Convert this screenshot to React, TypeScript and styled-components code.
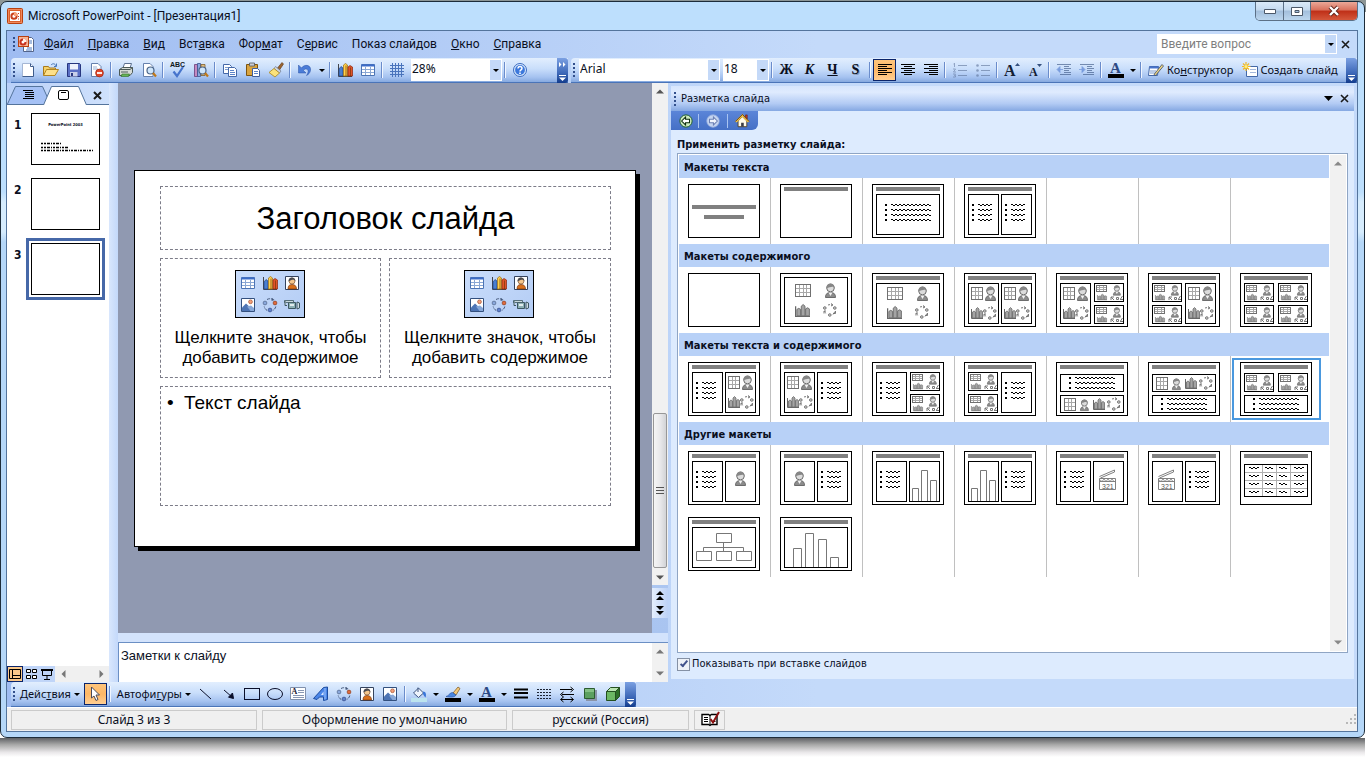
import React from "react";
import styled, { createGlobalStyle, css } from "styled-components";

const ui = `Roboto, "Noto Sans", sans-serif`;
const humanist = `"Noto Sans", "Open Sans", sans-serif`;
const tahoma = `"DejaVu Sans Condensed", "DejaVu Sans", sans-serif`;
const serif = `"Liberation Serif", serif`;

const GlobalStyle = createGlobalStyle`
  *, *::before, *::after { box-sizing: border-box; }
  body {
    margin: 0;
    background: #fff;
    font: 12px/16px ${ui};
    color: #0a0f1e;
  }
  button, input, select { font: inherit; color: inherit; margin: 0; }
  button { border: 0; padding: 0; background: none; cursor: default; }
  svg { display: block; flex: none; overflow: visible; }
  h1, h2, p { margin: 0; font: inherit; }
`;

/* ---------- window frame ---------- */

const Desktop = styled.div`
  display: flex;
  flex-direction: column;
  height: 100vh;
  min-height: 700px;
  padding: 1px 1px 0 0;
  background: linear-gradient(#8d9696 0 12px, #fff 12px);
`;

const AppWindow = styled.div`
  flex: 1;
  min-height: 0;
  display: flex;
  flex-direction: column;
  padding: 0 6px 5px 5px;
  border: 1px solid #1d2c3a;
  border-radius: 7px;
  background: linear-gradient(#bddffd 0 190px, #d6ecfd 200px 230px, #b5d7f8 240px);
`;

const DropShade = styled.div`
  flex: none;
  height: 19px;
  background: linear-gradient(#5f6164, #a8a8a8 35%, #e9e7e9 75%, #fff);
`;

const TitleBar = styled.header`
  flex: none;
  display: flex;
  align-items: flex-start;
  height: 28px;
`;

const TitleText = styled.h1`
  flex: 1;
  display: flex;
  align-items: center;
  gap: 5px;
  height: 27px;
  padding-left: 1px;
  font-size: 12px;
`;

const WinButtons = styled.div`
  display: flex;
  border: 1px solid #5c7086;
  border-top: 0;
  border-radius: 0 0 5px 5px;
  overflow: hidden;
`;

const WinButton = styled.button<{ $close?: boolean }>`
  display: flex;
  align-items: center;
  justify-content: center;
  width: ${(p) => (p.$close ? 47 : 27)}px;
  height: 18px;
  background: ${(p) =>
    p.$close
      ? "linear-gradient(#eba898, #d9705c 45%, #bf2f17 50%, #d4573b)"
      : "linear-gradient(#dbeaf8, #c3d9ee 45%, #a3bfdc 50%, #bcd6ee)"};
  & + & { border-left: 1px solid #5c7086; }
`;

const Client = styled.div`
  flex: 1;
  min-height: 0;
  display: flex;
  flex-direction: column;
  border: 1px solid #54749c;
  background: linear-gradient(90deg, #9fbcf1, #c4dafa 60%);
`;

/* ---------- bars ---------- */

const MenuBar = styled.nav`
  flex: none;
  display: flex;
  align-items: center;
  height: 27px;
  padding: 0 4px 1px 6px;
`;

const Grip = styled.span`
  flex: none;
  width: 2px;
  height: 14px;
  margin-right: 1px;
  background: repeating-linear-gradient(#33508c 0 2px, transparent 2px 4px);
`;

const MenuIcon = styled.span`
  margin: 0 3px 0 2px;
`;

const MenuItem = styled.button`
  height: 20px;
  padding: 0 7px;
  font-size: 12px;
  white-space: nowrap;
`;

const Spacer = styled.span<{ $w?: number }>`
  flex: ${(p) => (p.$w ? "none" : 1)};
  width: ${(p) => p.$w ?? 0}px;
`;

const HelpBox = styled.div`
  display: flex;
  width: 180px;
  height: 20px;
  border: 1px solid #fff;
  background: #fff;
  input {
    flex: 1;
    min-width: 0;
    border: 0;
    padding: 0 3px;
    background: none;
    font-size: 12px;
    outline: 0;
  }
  input::placeholder { color: #7f7f7f; opacity: 1; }
  button {
    display: flex;
    align-items: center;
    justify-content: center;
    width: 11px;
    background: #c4d9f8;
  }
`;

const CloseX = styled.button`
  display: flex;
  align-items: center;
  justify-content: center;
  width: 16px;
  height: 18px;
`;

const BarRow = styled.div`
  flex: none;
  display: flex;
  gap: 3px;
  height: 25px;
  padding-left: 4px;
`;

const ToolBar = styled.div<{ $grow?: boolean }>`
  display: flex;
  align-items: center;
  flex: ${(p) => (p.$grow ? "1" : "none")};
  min-width: 0;
  height: 25px;
  padding-left: 2px;
  border-bottom: 1px solid #4a74b8;
  border-radius: 4px 0 0 0;
  background: linear-gradient(#e2eefe, #c9defb 45%, #a5c2f0 80%, #86a9df);
`;

const BarEnd = styled.button<{ $full?: boolean }>`
  flex: none;
  display: flex;
  flex-direction: column;
  align-items: center;
  justify-content: ${(p) => (p.$full ? "space-between" : "flex-end")};
  width: 11px;
  height: 25px;
  padding: 4px 0 2px;
  border-radius: 0 3px 3px 0;
  background: linear-gradient(#7ba0e2, #3d68b8 60%, #123b8c);
`;

const ToolButton = styled.button<{ $on?: boolean; $off?: boolean }>`
  flex: none;
  display: flex;
  align-items: center;
  justify-content: center;
  width: 23px;
  height: 22px;
  ${(p) => p.$off && css`opacity: 0.6;`}
  ${(p) =>
    p.$on &&
    css`
      border: 1px solid #0a246a;
      background: linear-gradient(#fec57c, #fdb766 50%, #ffce92);
    `}
`;

const DropArrow = styled.button`
  flex: none;
  display: flex;
  align-items: center;
  justify-content: center;
  width: 11px;
  height: 22px;
`;

const Divider = styled.span`
  flex: none;
  width: 2px;
  height: 16px;
  margin: 0 2px;
  border-left: 1px solid #6a8ccb;
  border-right: 1px solid #f0f6ff;
`;

const TextButton = styled.button`
  flex: none;
  display: flex;
  align-items: center;
  gap: 3px;
  height: 22px;
  padding: 0 4px;
  font: 11px/16px ${humanist};
  white-space: nowrap;
`;

const Combo = styled.label<{ $w: number }>`
  position: relative;
  flex: none;
  width: ${(p) => p.$w}px;
  height: 22px;
  margin-left: 3px;
  border: 1px solid #fff;
  background: #fff;
  select {
    appearance: none;
    width: 100%;
    height: 20px;
    border: 0;
    padding: 0 14px 2px 0;
    background: none;
    font: 12px/16px ${humanist};
    outline: 0;
  }
  span {
    position: absolute;
    top: 0;
    right: 0;
    display: flex;
    align-items: center;
    justify-content: center;
    width: 11px;
    height: 20px;
    background: #c4d9f8;
    pointer-events: none;
  }
`;

const Glyph = styled.span<{ $italic?: boolean; $under?: boolean; $shadow?: boolean }>`
  font: bold 14px/18px ${serif};
  ${(p) => p.$italic && css`font-style: italic;`}
  ${(p) => p.$under && css`text-decoration: underline;`}
  ${(p) => p.$shadow && css`text-shadow: 1px 1px 0 #8798b8;`}
`;

/* ---------- main area ---------- */

const Work = styled.main`
  flex: 1;
  min-height: 0;
  display: flex;
`;

const SidePane = styled.aside`
  flex: none;
  display: flex;
  flex-direction: column;
  width: 102px;
  background: #fff;
`;

const Tabs = styled.div`
  flex: none;
  display: flex;
  align-items: flex-end;
  height: 22px;
  padding-right: 4px;
  border-bottom: 1px solid #54749c;
  background: linear-gradient(90deg, #b9d0f8, #cfe1fc);
`;

const Tab = styled.button<{ $front?: boolean }>`
  flex: none;
  width: 44px;
  height: 19px;
  margin: 0 ${(p) => (p.$front ? 0 : -8)}px ${(p) => (p.$front ? -1 : 0)}px 0;
`;

const SlideList = styled.ol`
  flex: 1;
  min-height: 0;
  overflow: hidden;
  list-style: none;
  margin: 0;
  padding: 3px 0 0 7px;
`;

const SlideItem = styled.li`
  display: flex;
  height: 65px;
  font: bold 12px/16px ${tahoma};
  > span { width: 12px; padding-top: 9px; }
`;

const SlideThumb = styled.button<{ $on?: boolean }>`
  width: 79px;
  height: 62px;
  padding: 2px;
  border: 3px solid ${(p) => (p.$on ? "#4668a8" : "transparent")};
  > span {
    display: block;
    height: 52px;
    border: 1px solid #000;
    background: #fff;
    overflow: hidden;
  }
`;

const MiniTitle = styled.span`
  display: block;
  padding-top: 8px;
  text-align: center;
  font: bold 4px/5px ${tahoma};
`;

const ViewBar = styled.div`
  flex: none;
  display: flex;
  height: 16px;
  background: #f0f0f0;
`;

const ViewButton = styled.button<{ $on?: boolean }>`
  display: flex;
  align-items: center;
  justify-content: center;
  width: 16px;
  height: 16px;
  background: #c0d5f8;
  ${(p) => p.$on && css`border: 1px solid #0a246a; background: #fbc98b;`}
`;

const HScroll = styled.div`
  flex: 1;
  display: flex;
  align-items: center;
  justify-content: space-between;
  padding: 0 4px 0 5px;
`;

const Splitter = styled.div`
  flex: none;
  width: 9px;
  background: linear-gradient(90deg, #d9e7fd, #c3d8fa);
`;

const Center = styled.section`
  flex: 1;
  min-width: 0;
  display: flex;
  flex-direction: column;
  background: #d3e3fc;
`;

const StageRow = styled.div`
  flex: 1;
  min-height: 0;
  display: flex;
`;

const Stage = styled.div`
  flex: 1;
  min-width: 0;
  display: flex;
  align-items: center;
  justify-content: center;
  overflow: hidden;
  background: #9099b1;
`;

const Slide = styled.article`
  flex: none;
  display: grid;
  grid-template-columns: 221px 222px;
  grid-template-rows: 64px 120px 120px;
  gap: 8px;
  width: 502px;
  height: 377px;
  padding: 15px 25px;
  border: 1px solid #000;
  background: #fff;
  color: #000;
  box-shadow: 4px 4px 0 #000;
  font-family: "Liberation Sans", Arial, sans-serif;
`;

const Placeholder = styled.div<{ $wide?: boolean }>`
  border: 1px dashed #7c7c88;
  ${(p) => p.$wide && css`grid-column: 1 / -1;`}
`;

const SlideTitle = styled.h2`
  text-align: center;
  font-size: 31px;
  line-height: 64px;
`;

const ContentHint = styled.p`
  text-align: center;
  font-size: 17px;
  line-height: 20px;
  white-space: nowrap;
`;

const SlideBody = styled.ul`
  list-style: none;
  margin: 0;
  padding: 4px 0 0 6px;
  font-size: 19px;
  line-height: 24px;
  li { display: flex; }
  li::before {
    content: "•";
    width: 17px;
  }
`;

const Palette = styled.div`
  display: grid;
  grid-template-columns: repeat(3, 22px);
  grid-template-rows: repeat(2, 22px);
  width: 70px;
  height: 48px;
  margin: 11px 0 10px 74px;
  padding: 1px;
  border: 1px solid #000;
  background: linear-gradient(135deg, #c9dcfa, #b4cdf5);
  button {
    display: flex;
    align-items: center;
    justify-content: center;
  }
`;

const VScroll = styled.div`
  flex: none;
  display: flex;
  flex-direction: column;
  align-items: center;
  justify-content: space-between;
  width: 16px;
  padding: 5px 0;
  background: #f1f1f1;
`;

const Track = styled.div`
  flex: 1;
  align-self: stretch;
  display: flex;
  flex-direction: column;
  justify-content: flex-end;
  padding: 0 1px 5px;
`;

const ScrollThumb = styled.div`
  display: flex;
  align-items: center;
  justify-content: center;
  height: 155px;
  border: 1px solid #979797;
  border-radius: 2px;
  background: linear-gradient(90deg, #f5f5f5, #e9e9eb 50%, #d2d3d6);
`;

const PageJump = styled.button`
  display: flex;
  align-items: center;
  justify-content: center;
  width: 16px;
  height: 15px;
  background: linear-gradient(90deg, #e4eefd, #bdd2f6);
`;

const StageScroll = styled.div`
  flex: none;
  display: flex;
  flex-direction: column;
  width: 16px;
  background: linear-gradient(#c3d8fa, #a9c4f0);
`;

const StageScrollBar = styled(VScroll)`
  flex: 1;
  padding-bottom: 4px;
`;

const JumpGroup = styled.div`
  flex: none;
  padding: 3px 0 15px;
`;

const Notes = styled.div`
  flex: none;
  display: flex;
  height: 40px;
  margin-top: 9px;
  border-top: 1px solid #6b8fc4;
  border-left: 1px solid #6b8fc4;
  background: #fff;
`;

const NotesText = styled.div`
  flex: 1;
  padding: 5px 2px;
  font: 13px/16px "Liberation Sans", Arial, sans-serif;
`;

/* ---------- task pane ---------- */

const TaskPane = styled.section`
  flex: none;
  display: flex;
  flex-direction: column;
  width: 683px;
  margin: 3px 3px 3px 3px;
  background: #ddebfe;
  font-family: ${tahoma};
  font-size: 11px;
`;

const PaneHead = styled.div`
  flex: none;
  display: flex;
  align-items: center;
  height: 25px;
  padding: 0 2px 0 3px;
  background: linear-gradient(#d6e5fd, #dfebfe 25%, #b3cbf4 70%, #85a8e2);
  > h2 { flex: 1; padding-left: 4px; padding-top: 1px; }
`;

const PaneNav = styled.div`
  flex: none;
  display: flex;
  align-items: center;
  align-self: flex-start;
  height: 19px;
  padding: 0 2px;
  border-radius: 0 0 6px 0;
  background: linear-gradient(#5b85d8, #4570c6);
  button + button { border-left: 1px solid #a9c4f2; }
`;

const NavButton = styled.button`
  display: flex;
  align-items: center;
  justify-content: center;
  width: 29px;
  height: 14px;
  &:first-child { width: 25px; }
`;

const PaneLabel = styled.div`
  flex: none;
  padding: 7px 6px 0;
  font-weight: bold;
  line-height: 16px;
`;

const ListBox = styled.div`
  flex: 1;
  min-height: 0;
  display: flex;
  margin: 0 6px;
  padding: 1px;
  border: 1px solid #8fa5c4;
  background: #fff;
`;

const Groups = styled.div`
  flex: 1;
  min-width: 0;
  overflow: hidden;
  padding-right: 1px;
`;

const GroupHead = styled.h2`
  height: 23px;
  padding: 2px 0 0 5px;
  background: #b8d1f7;
  font-weight: bold;
  line-height: 21px;
`;

const GroupGrid = styled.div`
  display: grid;
  grid-template-columns: repeat(7, 92px);
  grid-auto-rows: 66px;
`;

const Cell = styled.div`
  padding: 2px 1px;
  border-right: 1px solid #c0c0c0;
  &:nth-child(7n) { border-right: 0; }
`;

const LayoutButton = styled.button<{ $on?: boolean }>`
  display: flex;
  align-items: center;
  width: 89px;
  height: 62px;
  padding-left: 6px;
  border: 2px solid ${(p) => (p.$on ? "#4a98de" : "transparent")};
`;

const CheckRow = styled.label`
  flex: none;
  display: flex;
  align-items: center;
  gap: 2px;
  height: 26px;
  padding: 0 6px 4px;
  input {
    appearance: none;
    width: 13px;
    height: 13px;
    border: 1px solid #8591a5;
    background: #eef2f8;
    display: grid;
    place-items: center;
  }
  input:checked::after {
    content: "";
    width: 4px;
    height: 8px;
    margin-top: -2px;
    border: solid #42538c;
    border-width: 0 2px 2px 0;
    transform: rotate(40deg);
  }
`;

/* ---------- status bar ---------- */

const StatusBar = styled.footer`
  flex: none;
  display: flex;
  align-items: center;
  gap: 5px;
  height: 24px;
  padding-left: 4px;
  border-top: 1px solid #fff;
  background: #f0f0f0;
  font-family: ${humanist};
  font-size: 12px;
`;

const StatusCell = styled.div<{ $w: number }>`
  display: flex;
  align-items: center;
  justify-content: center;
  width: ${(p) => p.$w}px;
  height: 20px;
  border: 1px solid #cbcbcb;
`;

/* ---------- glyph drawings ---------- */

const Down = ({ c = "#000", w = 6 }: { c?: string; w?: number }) => (
  <svg width={w} height={Math.ceil(w / 2)} viewBox="0 0 6 3" preserveAspectRatio="none" aria-hidden>
    <path d="M0 0h6L3 3z" fill={c} />
  </svg>
);

const Arrow = ({ dir, c = "#555" }: { dir: "u" | "d" | "l" | "r"; c?: string }) => {
  const d = { u: "M0 5.500L4 1.500L8 5.500z", d: "M0 2.500L4 6.500L8 2.500z", l: "M5.500 0L1.500 4L5.500 8z", r: "M2.500 0L6.500 4L2.500 8z" }[dir];
  return (
    <svg width="8" height="8" viewBox="0 0 8 8" aria-hidden>
      <path d={d} fill={c} />
    </svg>
  );
};

const Cross = ({ w = 2 }: { w?: number }) => (
  <svg width="9" height="9" viewBox="0 0 9 9" aria-hidden>
    <path d="M1 1l7 7M8 1l-7 7" stroke="#1a1a1a" strokeWidth={w} />
  </svg>
);

const chartBars = (
  <>
    <path d="M1.500 2v12.500H15" stroke="#44464c" fill="none" />
    <path d="M2 7l2-2.500L6 6v8H2z" fill="#4b7fd0" stroke="#1e4488" strokeWidth=".7" />
    <path d="M6.500 3L8.500 1.500l2 1.500v11h-4z" fill="#ffd24a" stroke="#9a6a10" strokeWidth=".7" />
    <path d="M11 5l2-1.500 2.500 1.500v9H11z" fill="#e0552a" stroke="#8c2408" strokeWidth=".7" />
    <path d="M9 3.500V14M13.500 5.500V14" stroke="#7a3408" strokeWidth=".7" />
  </>
);

const tableGrid = (
  <>
    <path d="M1.500 2.500h13v11h-13z" fill="#fff" stroke="#4c74b4" />
    <path d="M1.500 2.500h13v2h-13z" fill="#3c6cc8" />
    <path d="M2 7.500h12M2 10.500h12M5.500 5v8M10.500 5v8" stroke="#8aa7d4" />
  </>
);

const cycle = (
  <>
    <path d="M5 2.500a6 6 0 0 1 6 0M13.800 9.500a6 6 0 0 1-3 4M5.200 13.500a6 6 0 0 1-3-4" stroke="#45587a" strokeDasharray="3 1" fill="none" />
    <circle cx="3" cy="6" r="1.900" fill="#8aa8dc" stroke="#45587a" strokeWidth=".6" />
    <circle cx="13" cy="6" r="1.900" fill="#e06a3c" stroke="#803010" strokeWidth=".6" />
    <circle cx="8" cy="13" r="1.900" fill="#5f80cc" stroke="#2a4078" strokeWidth=".6" />
    <path d="M10 1l2.500 2L9.500 4z" fill="#45587a" />
  </>
);

const person = (
  <>
    <path d="M1.500 1.500h13v13h-13z" fill="#fff" stroke="#33425e" />
    <path d="M4 14c0-3 1-4.500 4-4.500s4.500 1.500 4.500 4.500z" fill="#d8701c" stroke="#6b2c08" strokeWidth=".6" />
    <circle cx="8" cy="6" r="3" fill="#f5c68c" stroke="#6b4020" strokeWidth=".6" />
    <path d="M4.500 6.500c-.5-5 7-5.500 7 0-1-2.500-3.500-2.500-7 0z" fill="#4a4a50" />
  </>
);

const picture = (
  <>
    <path d="M1.500 1.500h13v13h-13z" fill="#fff" stroke="#33507e" />
    <path d="M2 14V10.500l4-4 8 7.500z" fill="#4d74b4" />
    <path d="M7 9.500l3.500 4.500H14V11l-3-2.500z" fill="#88a8d8" />
    <circle cx="10.500" cy="4.800" r="1.900" fill="#f3a07c" stroke="#963c18" strokeWidth=".6" />
  </>
);

const doc = <path d="M2.500 1.500H9l3 3v10H2.500z" fill="#fff" stroke="#6681ad" />;
const lens = (
  <>
    <circle cx="9.500" cy="8.500" r="3.500" fill="#cfe6fb" stroke="#4a6488" strokeWidth="1.200" />
    <path d="M12 11l3 3.500" stroke="#c07818" strokeWidth="2.200" />
  </>
);

const icons: Record<string, React.ReactNode> = {
  app: (
    <>
      <rect x=".5" y=".5" width="15" height="15" rx="1" fill="#f08a5c" stroke="#b8400f" />
      <rect x="2.500" y="2.500" width="11" height="11" fill="#fff" stroke="#d8602c" />
      <circle cx="7" cy="8.200" r="2.600" fill="#fff" stroke="#c8401c" strokeWidth="2" />
      <path d="M7 8V4A4 4 0 0 1 11 8z" fill="#f7a078" />
      <path d="M11.500 5v1M11.500 8v1M11.500 10.500v1" stroke="#c8401c" />
    </>
  ),
  pptdoc: (
    <>
      <path d="M5.500 1.500h8l2 2v12h-10z" fill="#fff" stroke="#53658b" />
      <path d="M11 5h3M11 7h3M9 12h5M8 14h6" stroke="#4e7ac0" />
      <rect x=".5" y=".5" width="10" height="10" fill="#f7b595" stroke="#b8400f" />
      <circle cx="5" cy="6" r="2.500" fill="#fff" stroke="#c8301c" strokeWidth="2" />
      <path d="M5 6V2.500A3.500 3.500 0 0 1 8.500 6z" fill="#fff0e8" />
    </>
  ),
  new: (
    <>
      <path d="M2.500 1.500h8l3 3v10h-11z" fill="#fff" stroke="#a4b6d4" />
      <path d="M10.500 1.500v3h3M13.500 4.500v10H2.500" fill="none" stroke="#3e5c8c" />
    </>
  ),
  open: (
    <>
      <path d="M.5 13.500v-9h5l1 1.500h6v2" fill="#f6d268" stroke="#a87a1c" />
      <path d="M.5 13.500l3-6h12l-3.500 6z" fill="#fde08a" stroke="#b48620" />
      <path d="M8 3c2-2 4-1.500 5 1M13.500 1.500V4.500H11" fill="none" stroke="#4a78b8" />
    </>
  ),
  save: (
    <>
      <path d="M1.500 1.500h12l1 1v12h-13z" fill="#5a6fc4" stroke="#27367e" />
      <path d="M4 2h8v5.500H4z" fill="#eef2fc" />
      <path d="M4 10h7.500v4.500H4z" fill="#c7cfe8" />
      <path d="M5 11h2v3H5z" fill="#27367e" />
    </>
  ),
  perm: (
    <>
      {doc}
      <path d="M4 5h4M4 7h5" stroke="#9db2d4" />
      <circle cx="10.500" cy="11" r="3.900" fill="#e0482c" stroke="#9c2410" strokeWidth=".7" />
      <path d="M8 11h5" stroke="#fff" strokeWidth="1.800" />
    </>
  ),
  print: (
    <>
      <path d="M5 6l1.500-4.500h7L12 6z" fill="#fff" stroke="#5c7090" />
      <path d="M1.500 7.500l3-2h10v5l-2.500 3h-10.500z" fill="#d6dbd6" stroke="#4c5a58" />
      <path d="M1.500 7.500h10.500l2.500-2M3 10h7" fill="none" stroke="#4c5a58" />
      <path d="M4 12h7.500l-1 2.500H3z" fill="#68b458" stroke="#2c6a24" strokeWidth=".6" />
    </>
  ),
  preview: (
    <>
      {doc}
      {lens}
    </>
  ),
  spell: (
    <>
      <text x="0" y="5" fontFamily="Liberation Sans" fontWeight="700" fontSize="7" fill="#101820">ABC</text>
      <path d="M3.500 9.500l3.500 4.500L13 5" fill="none" stroke="#4674cc" strokeWidth="2.200" />
    </>
  ),
  research: (
    <>
      <path d="M1.500 2.500h3v12h-3z" fill="#c48ac0" stroke="#6a3c78" strokeWidth=".8" />
      <path d="M4.500 1.500h3v13h-3z" fill="#8aa8e0" stroke="#3a5490" strokeWidth=".8" />
      <path d="M8 2.500h4v11H8z" fill="#e4c080" stroke="#80602c" strokeWidth=".8" />
      {lens}
    </>
  ),
  copy: (
    <>
      <path d="M1.500 2.500h6l2 2v7h-8z" fill="#fff" stroke="#4468a8" />
      <path d="M3 5.500h4M3 7.500h4" stroke="#7c9cd0" />
      <path d="M6.500 5.500h6l2 2v7h-8z" fill="#fff" stroke="#4468a8" />
      <path d="M8 8.500h4M8 10.500h5M8 12.500h5" stroke="#5c84c8" />
    </>
  ),
  paste: (
    <>
      <path d="M1.500 2.500h11v11h-11z" fill="#d9a440" stroke="#7c5410" />
      <path d="M4.500 1h5v3h-5z" fill="#c9ccd4" stroke="#54585e" strokeWidth=".8" />
      <path d="M7.500 6.500h5l2 2v6h-7z" fill="#fff" stroke="#3f5e9c" />
      <path d="M9 9.500h4M9 11.500h4" stroke="#5c84c8" />
    </>
  ),
  brush: (
    <>
      <path d="M9.500 6L14 .500l1.500 1.500L11.500 8z" fill="#9a6430" stroke="#5c3410" strokeWidth=".6" />
      <path d="M7.500 4.500l5.500 4.500-1.500 2L6 6.500z" fill="#d0d6e0" stroke="#606a7c" strokeWidth=".6" />
      <path d="M6 6.500l5.500 4.500L7 15l-6-4.500z" fill="#fbe27a" stroke="#a8841c" strokeWidth=".8" />
    </>
  ),
  undo: <path d="M4.500 6c3-4.500 10-3 9 2.500-.5 2.500-2 4-4 5 2-3 2.500-6-.5-6.500-1 0-2 .500-2.500 1.500L9 11H1.500V3z" fill="#4a7cd8" stroke="#2a52a4" strokeWidth=".5" />,
  chart: chartBars,
  table: tableGrid,
  grid: <path d="M1 3.500h14M1 6.500h14M1 9.500h14M1 12.500h14M3.500 1v14M6.500 1v14M9.500 1v14M12.500 1v14" stroke="#4a74bc" />,
  help: (
    <>
      <circle cx="8" cy="8" r="6.500" fill="#d8e8fc" stroke="#3c6cc0" />
      <circle cx="8" cy="8" r="4.900" fill="#3c78dc" />
      <path d="M6 6.500c0-3 4-2.500 4-.2C10 8 8 7.800 8 9.500" fill="none" stroke="#fff" strokeWidth="1.500" />
      <path d="M7.200 10.500h1.600v1.500H7.200z" fill="#fff" />
    </>
  ),
  left: <path d="M1 2.500h14M1 4.500h9M1 6.500h14M1 8.500h9M1 10.500h14M1 12.500h9" stroke="#000" />,
  center: <path d="M1 2.500h14M4 4.500h8M1 6.500h14M4 8.500h8M1 10.500h14M4 12.500h8" stroke="#000" />,
  right: <path d="M1 2.500h14M6 4.500h9M1 6.500h14M6 8.500h9M1 10.500h14M6 12.500h9" stroke="#000" />,
  numlist: (
    <>
      <path d="M6 3.500h9M6 8.500h9M6 13.500h9" stroke="#5d7298" />
      <path d="M2.500 1v4M1.500 2h1M1 7h2.500l-2 3h2.500M1 12h2.500l-1 1.500h1V15H1" stroke="#5d7298" fill="none" strokeWidth=".9" />
    </>
  ),
  bullist: (
    <>
      <path d="M6 3.500h9M6 8.500h9M6 13.500h9" stroke="#5d7298" />
      <circle cx="2.500" cy="3.500" r="1.300" fill="#5d7298" />
      <circle cx="2.500" cy="8.500" r="1.300" fill="#5d7298" />
      <circle cx="2.500" cy="13.500" r="1.300" fill="#5d7298" />
    </>
  ),
  outdent: (
    <>
      <path d="M1 2.500h14M8 4.500h5M8 6.500h7M8 8.500h5M8 10.500h7M4 12.500h11" stroke="#35507e" />
      <path d="M4 4.500L1 7.500l3 3zM4 7.500h3" fill="#4874cc" stroke="#4874cc" strokeWidth=".8" />
    </>
  ),
  indent: (
    <>
      <path d="M1 2.500h14M8 4.500h5M8 6.500h7M8 8.500h5M8 10.500h7M4 12.500h11" stroke="#35507e" />
      <path d="M3 4.500l3 3-3 3zM0 7.500h3" fill="#4874cc" stroke="#4874cc" strokeWidth=".8" />
    </>
  ),
  grow: (
    <>
      <text x="0" y="14" fontFamily="Liberation Serif" fontWeight="700" fontSize="16" fill="#142033">A</text>
      <path d="M11 4l2.500-3L16 4z" fill="#35507e" />
    </>
  ),
  shrink: (
    <>
      <text x="2" y="14" fontFamily="Liberation Serif" fontWeight="700" fontSize="12" fill="#142033">A</text>
      <path d="M10 2l2.500 3L15 2z" fill="#35507e" />
    </>
  ),
  fontcolor: (
    <>
      <text x="2" y="11" fontFamily="Liberation Serif" fontWeight="700" fontSize="15" fill="#2c4a84">A</text>
      <path d="M0 12h16v4H0z" fill="#000" />
    </>
  ),
  design: (
    <>
      <path d="M1.500 4.500h9l-1 9h-9z" fill="#fff" stroke="#4468a8" />
      <path d="M1.500 4.500h9v2h-9z" fill="#4874cc" />
      <path d="M2 9h6M2 11h5" stroke="#7c9cd0" />
      <path d="M6 12.500l8-10 1.500 1.500-8 9.500z" fill="#f3d884" stroke="#3c4a60" strokeWidth=".8" />
    </>
  ),
  newslide: (
    <>
      <path d="M4.500 4.500h11v10h-11z" fill="#fff" stroke="#4468a8" />
      <path d="M8 7.500h6M8 10.500h6" stroke="#a4b8dc" />
      <path d="M4 0v9M0 4.500h8.500M1 1.500l6 6M7 1.500l-6 6" stroke="#f0b828" strokeWidth="1.200" />
      <circle cx="4" cy="4.500" r="1.500" fill="#fff27c" />
    </>
  ),
  pointer: <path d="M4.500 1l8 8H9l2 4.500-2 1L7 10l-2.500 2z" fill="#fff" stroke="#4a4a58" />,
  line: <path d="M2 3l11 10" stroke="#0a0f2a" />,
  arrow: <path d="M3 4l8 7M12.500 12.500l-1-5.500-4 4.200z" stroke="#0a0f2a" fill="#0a0f2a" />,
  rect: <rect x=".5" y="2.500" width="15" height="11" fill="none" stroke="#0a0f2a" />,
  ellipse: <ellipse cx="8" cy="8" rx="7.500" ry="5.500" fill="none" stroke="#0a0f2a" />,
  textbox: (
    <>
      <path d="M.5 1.500h15v12H.5z" fill="#fff" stroke="#8090ac" />
      <text x="1.500" y="8" fontFamily="Liberation Serif" fontWeight="700" fontSize="8" fill="#1a2030">A</text>
      <path d="M8 4.500h6M8 6.500h6M3 9.500h11M3 11.500h11" stroke="#6a7ca0" strokeWidth=".8" />
    </>
  ),
  wordart: (
    <>
      <path d="M.5 12.500L10.500 1.500l4-.5v12.500l-4 1V11H6.500L4 13.500z" fill="#4a86e8" stroke="#1c4ca0" />
      <path d="M8 9h2.500V5.500z" fill="#dce9ff" />
      <path d="M12 2v11.500" stroke="#9cc0f8" />
    </>
  ),
  cycle,
  person,
  picture,
  camera: (
    <>
      <path d="M4.500 5.500h7v6h-7z" fill="#8cb0b4" stroke="#3c5660" />
      <path d="M.5 3.500h9v2h-9z" fill="#c8d8dc" stroke="#3c5660" strokeWidth=".8" />
      <path d="M1 4v4.500h2M13 5v7l2.500-1V6z" fill="#d0dce4" stroke="#3c5660" />
      <path d="M6 8h4" stroke="#fff" strokeWidth="1.500" />
    </>
  ),
  fill: (
    <>
      <path d="M2.500 7l5-5 5 5-5 4.500z" fill="#eef4fc" stroke="#3c5480" />
      <path d="M7 6V1.500" stroke="#3c5480" />
      <path d="M12 5.500c3 0 3.500 3 2.500 6C13 10 12.500 9 12 8z" fill="#3a76d8" />
      <path d="M0 12h16v4H0z" fill="#bde4ee" />
    </>
  ),
  pen: (
    <>
      <path d="M8 7l5-6 2 1.500L11 9z" fill="#f3c87a" stroke="#7a5214" strokeWidth=".7" />
      <path d="M1 10.500c3 0 3-4 6.500-4L11 9c-1 2.500-6 2.500-10 1.500z" fill="#4a86e0" stroke="#244c98" strokeWidth=".6" />
      <path d="M0 12h16v4H0z" fill="#000" />
    </>
  ),
  lines: <path d="M1 3.500h14M1 7h14M1 11.500h14" stroke="#000" strokeWidth="2" />,
  dashes: <path d="M1 3.500h14M1 6.500h14M1 9.500h14M1 12.500h14" stroke="#1c2434" strokeDasharray="2 1" />,
  arrows: (
    <>
      <path d="M1 3.500h12M3 8.500h12M2 13.500h12" stroke="#000" />
      <path d="M11.500 1l3 2.500-3 2.500M4.500 6l-3 2.500 3 2.500M4.500 11l-3 2.500 3 2.500M11.500 11l3 2.500-3 2.500" fill="none" stroke="#000" />
    </>
  ),
  shadow: (
    <>
      <path d="M4 4h11v11H4z" fill="#8a94a8" />
      <path d="M2.500 2.500h10v10h-10z" fill="#5ca060" stroke="#2c5c30" />
      <path d="M3 3h9v3H3z" fill="#84c084" />
    </>
  ),
  cube: (
    <>
      <path d="M1.500 5.500h9v9h-9z" fill="#6cb864" stroke="#245020" />
      <path d="M1.500 5.500l4-4h9l-4 4z" fill="#b8e4b0" stroke="#245020" />
      <path d="M10.500 5.500l4-4v9l-4 4z" fill="#2c7028" stroke="#245020" />
    </>
  ),
  back: (
    <>
      <circle cx="8" cy="8" r="7" fill="#cdeabf" stroke="#1c5c1c" />
      <path d="M3 8l4.500-4.500v2.500h4.500v4H7.500v2.500z" fill="#fff" stroke="#0c2c0c" strokeWidth="1.200" />
    </>
  ),
  fwd: (
    <>
      <circle cx="8" cy="8" r="7" fill="#c4d4f0" stroke="#a8bce4" />
      <path d="M13 8L8.500 3.500v2.500H4v4h4.500v2.500z" fill="#f0f4fc" stroke="#6c80b4" strokeWidth="1.200" />
    </>
  ),
  home: (
    <>
      <path d="M3.500 8v6.500h10V8L8.500 3z" fill="#fffbea" stroke="#4c3c20" />
      <path d="M1 9l7.500-7.500L15.500 9" fill="none" stroke="#f0c040" strokeWidth="2.400" />
      <path d="M.5 8.500l8-8 7.500 8" fill="none" stroke="#5c3410" />
      <path d="M12 1h2v4.500l-2-2z" fill="#c83820" stroke="#601808" strokeWidth=".6" />
      <path d="M7 10h3v4.500H7z" fill="#3c3c44" />
    </>
  ),
  book: (
    <>
      <path d="M0 2.500h6.500l1.500 1 1.500-1H15v10H9.500l-1.500 1-1.500-1H0z" fill="#fff" stroke="#000" strokeWidth="1.400" />
      <path d="M8 3v10M2 5.500h4M2 7.500h4M2 9.500h4M10 9.500h3.500" stroke="#000" />
      <path d="M8.500 7l2.500 3.500L17 0" fill="none" stroke="#8c1010" strokeWidth="2" />
    </>
  ),
};

const Icon = ({ n, s = 16 }: { n: string; s?: number }) => (
  <svg width={s} height={s} viewBox="0 0 16 16" aria-hidden>
    {icons[n]}
  </svg>
);

/* ---------- layout previews ---------- */

const wave = (x: number, y: number, w: number) => (
  <g key={`${x}-${y}`} stroke="#000">
    <path d={`M${x} ${y + 0.5}h${w}`} strokeDasharray="2 2" />
    <path d={`M${x} ${y + 1.5}h${w}`} strokeDasharray="2 2" strokeDashoffset="2" />
  </g>
);

const Bullets = ({ x, y, n = 4, w = 14, gap = 6 }: { x: number; y: number; n?: number; w?: number; gap?: number }) => (
  <>
    {Array.from({ length: n }, (_, i) => (
      <React.Fragment key={i}>
        <rect x={x} y={y + i * 5} width="2" height="2" fill="#000" />
        {wave(x + gap, y + i * 5, w)}
      </React.Fragment>
    ))}
  </>
);

const Box = ({ x, y, w, h }: { x: number; y: number; w: number; h: number }) => (
  <rect x={x + 0.5} y={y + 0.5} width={w - 1} height={h - 1} fill="#fff" stroke="#000" />
);

const Bar = ({ x = 4, y = 3, w = 64 }: { x?: number; y?: number; w?: number }) => (
  <rect x={x} y={y} width={w} height="4" fill="#808080" />
);

const GTable = ({ x, y, w, h }: { x: number; y: number; w: number; h: number }) => {
  const cols = w > 13 ? 4 : 3;
  const cw = (w - 1) / cols;
  const rh = (h - 1) / 3;
  return (
    <g stroke="#a8a8a8" fill="none">
      {Array.from({ length: cols - 1 }, (_, i) => {
        const p = Math.round(x + cw * (i + 1)) + 0.5;
        return <path key={i} d={`M${p} ${y + 1}v${h - 2}`} />;
      })}
      {[1, 2].map((i) => {
        const p = Math.round(y + rh * i) + 0.5;
        return <path key={i} d={`M${x + 1} ${p}h${w - 2}`} />;
      })}
      <rect x={x + 0.5} y={y + 0.5} width={w - 1} height={h - 1} stroke="#707070" />
    </g>
  );
};

const GPerson = ({ x, y, s = 1 }: { x: number; y: number; s?: number }) => (
  <g transform={`translate(${x} ${y}) scale(${s})`}>
    <path d="M.5 14.500c0-3.500 1.500-5 5-5s5 1.500 5 5z" fill="#8c8c8c" stroke="#6c6c6c" />
    <circle cx="5.500" cy="5" r="3.800" fill="#dcdcdc" stroke="#6c6c6c" />
    <path d="M1.500 5C1-1 10-1 9.500 5 8 2.500 5 4.500 1.500 5z" fill="#868686" />
    <path d="M3.500 9.500l2 3.500 2-3.500z" fill="#f4f4f4" />
  </g>
);

const GChart = ({ x, y, w = 12, h = 12 }: { x: number; y: number; w?: number; h?: number }) => (
  <g transform={`translate(${x} ${y}) scale(${w / 12} ${h / 12})`}>
    <path d="M.5 2v9.500H12" stroke="#666" fill="none" />
    <path d="M1.500 5l1.500-1 1.500 1v6H1.500zM5 2l1.500-1.500L8 2v9H5zM8.500 4.500l1.500-1 1.500 1V11h-3z" fill="#a4a4a4" stroke="#6c6c6c" strokeWidth=".8" />
  </g>
);

const GCycle = ({ x, y }: { x: number; y: number }) => (
  <g transform={`translate(${x} ${y})`} stroke="#777" fill="none">
    <path d="M5 2a6 6 0 0 1 4 0M12 8.500l-2 3M1.500 8l1.500 3" strokeDasharray="2 1" />
    <circle cx="1.800" cy="5" r="1.300" fill="#ccc" />
    <circle cx="11.800" cy="5" r="1.300" fill="#ccc" />
    <circle cx="6.800" cy="12" r="1.300" fill="#ccc" />
    <path d="M8 .500l2 1.500-2 1M12.500 8v2.500H10M1 10.500V8h2" />
  </g>
);

const Column = ({ x }: { x: number }) => (
  <>
    <Box x={x} y={10} w={31} h={41} />
    <GTable x={x + 3} y={14} w={12} h={13} />
    <GPerson x={x + 17} y={13} />
    <GChart x={x + 3} y={34} />
    <GCycle x={x + 15} y={33} />
  </>
);

const Quad = ({ x, y }: { x: number; y: number }) => (
  <>
    <Box x={x} y={y} w={30} h={19} />
    <GTable x={x + 2} y={y + 2} w={11} h={7} />
    <GPerson x={x + 19} y={y + 2} s={0.7} />
    <GChart x={x + 3} y={y + 11} w={10} h={6} />
    <path d={`M${x + 17} ${y + 17}v-3h3M${x + 17} ${y + 14}l3 3M${x + 22.5} ${y + 14.5}h2v2h-2zM${x + 28.5} ${y + 13}l-2 3M${x + 26} ${y + 16.5}h3`} stroke="#777" fill="none" />
  </>
);

const TextCol = ({ x }: { x: number }) => (
  <>
    <Box x={x} y={10} w={31} h={41} />
    <Bullets x={x + 4} y={20} />
  </>
);

const IconRow = ({ y }: { y: number }) => (
  <>
    <GTable x={8} y={y} w={12} h={13} />
    <GPerson x={24} y={y + 1} s={0.8} />
    <GChart x={37} y={y} />
    <GCycle x={51} y={y - 1} />
  </>
);

const Big = ({ dy }: { dy: number }) => (
  <>
    <GTable x={15} y={11 + dy} w={16} h={13} />
    <GPerson x={45} y={10 + dy} />
    <GChart x={15} y={31 + dy - (dy ? 1 : 0)} w={15} h={13} />
    <GCycle x={43} y={30 + dy - (dy ? 1 : 0)} />
  </>
);

const HBox = ({ y }: { y: number }) => <Box x={4} y={y} w={64} h={18} />;

const Columns3 = ({ x }: { x: number }) => (
  <>
    <Box x={x} y={10} w={31} h={41} />
    <path
      d={`M${x + 3.5} 50v-12.500h6V50M${x + 12.5} 50V19.500h6V50M${x + 21.5} 50V29.500h6V50`}
      fill="none"
      stroke="#777"
    />
  </>
);

const Clap = ({ x }: { x: number }) => (
  <>
    <Box x={x} y={10} w={31} h={41} />
    <g fill="none" stroke="#808080">
      <path d={`M${x + 6.5} 27.500h16v11h-16zM${x + 6.5} 30.500h16M${x + 6.5} 25.500l15-6.500v2l-14 6`} />
      <path d={`M${x + 7} 29l2 1.500 2-2.500 2 2.500 2-2.500 2 2.500 2-2.500 2 2.500`} strokeWidth=".8" />
    </g>
    <text x={x + 9} y="37.500" fontFamily="Liberation Sans" fontSize="7" fill="#555">321</text>
  </>
);

const layouts: { title: string; items: React.ReactNode[]; cells: number }[] = [
  {
    title: "Макеты текста",
    cells: 7,
    items: [
      <><Bar y={21} /><Bar x={16} y={31} w={40} /></>,
      <Bar />,
      <><Bar /><Box x={4} y={10} w={64} h={41} /><Bullets x={13} y={20} w={40} /></>,
      <><Bar /><TextCol x={4} /><TextCol x={37} /></>,
    ],
  },
  {
    title: "Макеты содержимого",
    cells: 7,
    items: [
      null,
      <><Box x={4} y={4} w={64} h={47} /><Big dy={0} /></>,
      <><Bar /><Box x={4} y={10} w={64} h={41} /><Big dy={3} /></>,
      <><Bar /><Column x={4} /><Column x={37} /></>,
      <><Bar /><Column x={4} /><Quad x={38} y={10} /><Quad x={38} y={32} /></>,
      <><Bar /><Quad x={4} y={10} /><Quad x={4} y={32} /><Column x={37} /></>,
      <><Bar /><Quad x={4} y={10} /><Quad x={38} y={10} /><Quad x={4} y={32} /><Quad x={38} y={32} /></>,
    ],
  },
  {
    title: "Макеты текста и содержимого",
    cells: 7,
    items: [
      <><Bar /><TextCol x={4} /><Column x={37} /></>,
      <><Bar /><Column x={4} /><TextCol x={37} /></>,
      <><Bar /><TextCol x={4} /><Quad x={38} y={10} /><Quad x={38} y={32} /></>,
      <><Bar /><Quad x={4} y={10} /><Quad x={4} y={32} /><TextCol x={37} /></>,
      <><Bar /><HBox y={12} /><Bullets x={13} y={15} n={3} w={40} /><HBox y={33} /><IconRow y={36} /></>,
      <><Bar /><HBox y={12} /><IconRow y={15} /><HBox y={33} /><Bullets x={13} y={36} n={3} w={40} /></>,
      <><Bar /><Quad x={4} y={11} /><Quad x={38} y={11} /><HBox y={33} /><Bullets x={13} y={36} n={3} w={40} /></>,
    ],
  },
  {
    title: "Другие макеты",
    cells: 14,
    items: [
      <><Bar /><TextCol x={4} /><Box x={37} y={10} w={31} h={41} /><GPerson x={47} y={20} /></>,
      <><Bar /><Box x={4} y={10} w={31} h={41} /><GPerson x={14} y={20} /><TextCol x={37} /></>,
      <><Bar /><TextCol x={4} /><Columns3 x={37} /></>,
      <><Bar /><Columns3 x={4} /><TextCol x={37} /></>,
      <><Bar /><TextCol x={4} /><Clap x={37} /></>,
      <><Bar /><Clap x={4} /><TextCol x={37} /></>,
      <>
        <Bar />
        <path d="M22.500 13v33M36.500 13v33M50.500 13v33M5 21.500h62M5 29.500h62M5 37.500h62" stroke="#b0b0b0" />
        <rect x="4.500" y="13.500" width="63" height="32" fill="none" stroke="#000" />
        {[16, 24, 32, 40].map((y) => [wave(9, y, 10), wave(25, y, 8), wave(39, y, 8), wave(54, y, 10)])}
      </>,
      <>
        <Bar />
        <Box x={4} y={10} w={64} h={41} />
        <path
          d="M28.500 16.500h15v9h-15zM8.500 34.500h15v9h-15zM28.500 34.500h15v9h-15zM48.500 34.500h15v9h-15zM35.500 26v8M15.500 34v-3.500h40V34"
          fill="none"
          stroke="#777"
        />
      </>,
      <>
        <Bar />
        <Box x={4} y={10} w={64} h={41} />
        <path d="M13.500 50V31.500h8V50M25.500 50V16.500h8V50M38.500 50V22.500h8V50M50.500 50V40.500h8V50" fill="none" stroke="#777" />
      </>,
    ],
  },
];

const Preview = ({ children }: { children?: React.ReactNode }) => (
  <svg width="72" height="54" viewBox="0 0 72 54" aria-hidden>
    <rect x=".5" y=".5" width="71" height="53" fill="#fff" stroke="#000" />
    {children}
  </svg>
);

/* ---------- composite parts ---------- */

const Tool = ({ n, label, on, off }: { n: string; label: string; on?: boolean; off?: boolean }) => (
  <ToolButton $on={on} $off={off} aria-label={label} aria-pressed={on}>
    <Icon n={n} />
  </ToolButton>
);

const More = ({ full }: { full?: boolean }) => (
  <BarEnd $full={full} aria-label="Параметры панелей инструментов">
    {full && (
      <svg width="7" height="5" viewBox="0 0 7 5" aria-hidden>
        <path d="M0 0l2.500 2.500L0 5zM4 0l2.500 2.500L4 5z" fill="#fff" />
      </svg>
    )}
    <svg width="7" height="6" viewBox="0 0 7 6" aria-hidden>
      <path d="M0 .500h7" stroke="#fff" />
      <path d="M0 2.500h7L3.500 6z" fill="#fff" />
    </svg>
  </BarEnd>
);

const Drop = ({ label }: { label: string }) => (
  <DropArrow aria-label={label}>
    <Down />
  </DropArrow>
);

const Select = ({ w, value, label }: { w: number; value: string; label: string }) => (
  <Combo $w={w}>
    <select aria-label={label} defaultValue={value}>
      <option>{value}</option>
    </select>
    <span>
      <Down />
    </span>
  </Combo>
);

const menus: [string, string, string][] = [
  ["", "Ф", "айл"],
  ["", "П", "равка"],
  ["", "В", "ид"],
  ["Вст", "а", "вка"],
  ["Фор", "м", "ат"],
  ["С", "е", "рвис"],
  ["Показ слай", "д", "ов"],
  ["", "О", "кно"],
  ["", "С", "правка"],
];

const ContentPlaceholder = () => (
  <Placeholder>
    <Palette>
      {[
        ["table", "Таблица"],
        ["chart", "Диаграмма"],
        ["person", "Картинка"],
        ["picture", "Рисунок"],
        ["cycle", "Схема"],
        ["camera", "Клип мультимедиа"],
      ].map(([n, l]) => (
        <button key={n} aria-label={l}>
          <Icon n={n} />
        </button>
      ))}
    </Palette>
    <ContentHint>
      Щелкните значок, чтобы
      <br />
      добавить содержимое
    </ContentHint>
  </Placeholder>
);

export default function App() {
  return (
    <>
      <GlobalStyle />
      <Desktop>
        <AppWindow>
          <TitleBar>
            <TitleText>
              <Icon n="app" />
              Microsoft PowerPoint - [Презентация1]
            </TitleText>
            <WinButtons>
              <WinButton aria-label="Свернуть">
                <svg width="12" height="5" viewBox="0 0 12 5"><path d="M.5.5h11v4H.5z" fill="#fff" stroke="#4c5868" /></svg>
              </WinButton>
              <WinButton aria-label="Развернуть">
                <svg width="12" height="9" viewBox="0 0 12 9">
                  <path d="M.5.5h11v8H.5zM4 3.500h4v2H4z" fill="#fff" fillRule="evenodd" stroke="#4c5868" />
                </svg>
              </WinButton>
              <WinButton $close aria-label="Закрыть">
                <svg width="12" height="10" viewBox="0 0 12 10">
                  <path d="M2 1l8 8M10 1L2 9" stroke="#5c2018" strokeWidth="4" />
                  <path d="M2 1l8 8M10 1L2 9" stroke="#fff" strokeWidth="2.400" />
                </svg>
              </WinButton>
            </WinButtons>
          </TitleBar>

          <Client>
            <MenuBar>
              <Grip />
              <MenuIcon>
                <Icon n="pptdoc" />
              </MenuIcon>
              {menus.map(([a, u, b]) => (
                <MenuItem key={a + u + b}>
                  {a}
                  <u>{u}</u>
                  {b}
                </MenuItem>
              ))}
              <Spacer />
              <HelpBox>
                <input placeholder="Введите вопрос" aria-label="Введите вопрос" />
                <button aria-label="Показать список"><Down /></button>
              </HelpBox>
              <CloseX aria-label="Закрыть окно"><Cross w={1.6} /></CloseX>
            </MenuBar>

            <BarRow>
              <ToolBar>
                <Grip />
                <Tool n="new" label="Создать" />
                <Tool n="open" label="Открыть" />
                <Tool n="save" label="Сохранить" />
                <Tool n="perm" label="Разрешения" />
                <Divider />
                <Tool n="print" label="Печать" />
                <Tool n="preview" label="Предварительный просмотр" />
                <Divider />
                <Tool n="spell" label="Орфография" />
                <Tool n="research" label="Справочные материалы" />
                <Divider />
                <Tool n="copy" label="Копировать" />
                <Tool n="paste" label="Вставить" />
                <Tool n="brush" label="Формат по образцу" />
                <Divider />
                <Tool n="undo" label="Отменить" />
                <Drop label="Список отмены" />
                <Divider />
                <Tool n="chart" label="Добавить диаграмму" />
                <Tool n="table" label="Добавить таблицу" />
                <Divider />
                <Tool n="grid" label="Сетка" />
                <Select w={91} value="28%" label="Масштаб" />
                <Divider />
                <Tool n="help" label="Справка" />
                <Spacer $w={26} />
                <More full />
              </ToolBar>
              <ToolBar $grow>
                <Grip />
                <Select w={141} value="Arial" label="Шрифт" />
                <Select w={46} value="18" label="Размер шрифта" />
                <Divider />
                <ToolButton aria-label="Полужирный"><Glyph>Ж</Glyph></ToolButton>
                <ToolButton aria-label="Курсив"><Glyph $italic>К</Glyph></ToolButton>
                <ToolButton aria-label="Подчеркнутый"><Glyph $under>Ч</Glyph></ToolButton>
                <ToolButton aria-label="Тень"><Glyph $shadow>S</Glyph></ToolButton>
                <Divider />
                <Tool n="left" label="По левому краю" on />
                <Tool n="center" label="По центру" />
                <Tool n="right" label="По правому краю" />
                <Divider />
                <Tool n="numlist" label="Нумерация" off />
                <Tool n="bullist" label="Маркеры" off />
                <Divider />
                <Tool n="grow" label="Увеличить размер шрифта" />
                <Tool n="shrink" label="Уменьшить размер шрифта" />
                <Divider />
                <Tool n="outdent" label="Уменьшить отступ" off />
                <Tool n="indent" label="Увеличить отступ" off />
                <Divider />
                <Tool n="fontcolor" label="Цвет текста" />
                <Drop label="Выбрать цвет текста" />
                <Divider />
                <TextButton>
                  <Icon n="design" />
                  <span>Ко<u>н</u>структор</span>
                </TextButton>
                <TextButton>
                  <Icon n="newslide" />
                  <span>Создать слай<u>д</u></span>
                </TextButton>
                <Spacer />
                <More />
              </ToolBar>
            </BarRow>

            <Work>
              <SidePane>
                <Tabs>
                  <Tab aria-label="Структура">
                    <svg width="44" height="19" viewBox="0 0 44 19">
                      <path d="M.5 19L8.500 1.500h27L43.500 19" fill="#a5c1f5" stroke="#54749c" />
                      <path d="M16 5.500h10M18 7.500h9M18 9.500h9M18 11.500h9M16 13.500h11" stroke="#000" />
                    </svg>
                  </Tab>
                  <Tab $front aria-label="Слайды">
                    <svg width="44" height="19" viewBox="0 0 44 19">
                      <path d="M.5 19L8.500.5h27L43.500 19" fill="#fff" stroke="#54749c" />
                      <rect x="15.500" y="4.500" width="10" height="9" rx="1.500" fill="none" stroke="#000" />
                      <path d="M18 6.500h5" stroke="#000" />
                    </svg>
                  </Tab>
                  <Spacer />
                  <CloseX aria-label="Закрыть область"><Cross /></CloseX>
                </Tabs>
                <SlideList>
                  <SlideItem>
                    <span>1</span>
                    <SlideThumb aria-label="Слайд 1">
                      <span>
                        <MiniTitle>PowerPoint 2003</MiniTitle>
                        <svg width="67" height="30" viewBox="0 0 67 30" aria-hidden>
                          <path d="M9 16.500h2M12 16.500h17M9 20.500h2M12 20.500h24M9 23.500h2M12 23.500h49" stroke="#000" strokeWidth="1.600" strokeDasharray="2 1 3 1 1 1" />
                        </svg>
                      </span>
                    </SlideThumb>
                  </SlideItem>
                  <SlideItem>
                    <span>2</span>
                    <SlideThumb aria-label="Слайд 2"><span /></SlideThumb>
                  </SlideItem>
                  <SlideItem>
                    <span>3</span>
                    <SlideThumb $on aria-label="Слайд 3"><span /></SlideThumb>
                  </SlideItem>
                </SlideList>
                <ViewBar>
                  <ViewButton $on aria-label="Обычный режим">
                    <svg width="12" height="12" viewBox="0 0 12 12">
                      <path d="M.5 1.500h11v9H.5zM3.500 1.500v9M3.500 7.500h8" fill="none" stroke="#000" />
                    </svg>
                  </ViewButton>
                  <ViewButton aria-label="Режим сортировщика">
                    <svg width="11" height="10" viewBox="0 0 11 10">
                      <path d="M.5.5h4v3h-4zM6.500.5h4v3h-4zM.5 6.500h4v3h-4zM6.500 6.500h4v3h-4z" fill="#fff" stroke="#000" />
                    </svg>
                  </ViewButton>
                  <ViewButton aria-label="Показ слайдов">
                    <svg width="12" height="11" viewBox="0 0 12 11">
                      <path d="M0 1h12" stroke="#000" strokeWidth="2" />
                      <path d="M1.500 2v4.500h9V2M6 6.500V10M3 10.500h6" fill="none" stroke="#000" />
                    </svg>
                  </ViewButton>
                  <HScroll>
                    <Arrow dir="l" c="#777" />
                    <Arrow dir="r" c="#777" />
                  </HScroll>
                </ViewBar>
              </SidePane>
              <Splitter />

              <Center>
                <StageRow>
                  <Stage>
                    <Slide>
                      <Placeholder $wide>
                        <SlideTitle>Заголовок слайда</SlideTitle>
                      </Placeholder>
                      <ContentPlaceholder />
                      <ContentPlaceholder />
                      <Placeholder $wide>
                        <SlideBody>
                          <li>Текст слайда</li>
                        </SlideBody>
                      </Placeholder>
                    </Slide>
                  </Stage>
                  <StageScroll>
                    <StageScrollBar>
                      <Arrow dir="u" />
                      <Track>
                        <ScrollThumb>
                          <svg width="8" height="8" viewBox="0 0 8 8" aria-hidden>
                            <path d="M0 .500h8M0 3.500h8M0 6.500h8" stroke="#555" />
                          </svg>
                        </ScrollThumb>
                      </Track>
                      <Arrow dir="d" />
                    </StageScrollBar>
                    <JumpGroup>
                      <PageJump aria-label="Предыдущий слайд">
                        <svg width="8" height="9" viewBox="0 0 8 9"><path d="M0 4l4-4 4 4zM0 9l4-4 4 4z" fill="#000" /></svg>
                      </PageJump>
                      <PageJump aria-label="Следующий слайд">
                        <svg width="8" height="9" viewBox="0 0 8 9"><path d="M0 0l4 4 4-4zM0 5l4 4 4-4z" fill="#000" /></svg>
                      </PageJump>
                    </JumpGroup>
                  </StageScroll>
                </StageRow>
                <Notes>
                  <NotesText>Заметки к слайду</NotesText>
                  <VScroll>
                    <Arrow dir="u" c="#777" />
                    <Arrow dir="d" c="#777" />
                  </VScroll>
                </Notes>
              </Center>

              <TaskPane>
                <PaneHead>
                  <Grip />
                  <h2>Разметка слайда</h2>
                  <CloseX aria-label="Другие области задач"><Down w={9} /></CloseX>
                  <CloseX aria-label="Закрыть область задач"><Cross w={1.6} /></CloseX>
                </PaneHead>
                <PaneNav>
                  <NavButton aria-label="Назад"><Icon n="back" s={14} /></NavButton>
                  <NavButton aria-label="Вперед"><Icon n="fwd" s={14} /></NavButton>
                  <NavButton aria-label="Домой"><Icon n="home" s={14} /></NavButton>
                </PaneNav>
                <PaneLabel>Применить разметку слайда:</PaneLabel>
                <ListBox>
                  <Groups>
                    {layouts.map((g) => (
                      <section key={g.title}>
                        <GroupHead>{g.title}</GroupHead>
                        <GroupGrid>
                          {Array.from({ length: g.cells }, (_, i) => (
                            <Cell key={i}>
                              {i < g.items.length && (
                                <LayoutButton
                                  $on={g.title === "Макеты текста и содержимого" && i === 6}
                                  aria-label={`${g.title}, ${i + 1}`}
                                >
                                  <Preview>{g.items[i]}</Preview>
                                </LayoutButton>
                              )}
                            </Cell>
                          ))}
                        </GroupGrid>
                      </section>
                    ))}
                  </Groups>
                  <VScroll>
                    <Arrow dir="u" c="#888" />
                    <Arrow dir="d" c="#888" />
                  </VScroll>
                </ListBox>
                <CheckRow>
                  <input type="checkbox" defaultChecked />
                  Показывать при вставке слайдов
                </CheckRow>
              </TaskPane>
            </Work>

            <BarRow>
              <ToolBar>
                <Grip />
                <TextButton>
                  <span>Дейс<u>т</u>вия</span>
                  <Down />
                </TextButton>
                <Tool n="pointer" label="Выбор объектов" on />
                <Divider />
                <TextButton>
                  <span>Автофи<u>г</u>уры</span>
                  <Down />
                </TextButton>
                <Tool n="line" label="Линия" />
                <Tool n="arrow" label="Стрелка" />
                <Tool n="rect" label="Прямоугольник" />
                <Tool n="ellipse" label="Овал" />
                <Tool n="textbox" label="Надпись" />
                <Tool n="wordart" label="Объект WordArt" />
                <Tool n="cycle" label="Диаграмма" />
                <Tool n="person" label="Картинка" />
                <Tool n="picture" label="Рисунок" />
                <Divider />
                <Tool n="fill" label="Цвет заливки" />
                <Drop label="Выбрать цвет заливки" />
                <Tool n="pen" label="Цвет линий" />
                <Drop label="Выбрать цвет линий" />
                <Tool n="fontcolor" label="Цвет шрифта" />
                <Drop label="Выбрать цвет шрифта" />
                <Tool n="lines" label="Тип линии" />
                <Tool n="dashes" label="Тип штриха" />
                <Tool n="arrows" label="Вид стрелки" />
                <Tool n="shadow" label="Стиль тени" />
                <Tool n="cube" label="Объем" />
                <Spacer />
                <More />
              </ToolBar>
            </BarRow>

            <StatusBar>
              <StatusCell $w={246}>Слайд 3 из 3</StatusCell>
              <StatusCell $w={245}>Оформление по умолчанию</StatusCell>
              <StatusCell $w={177}>русский (Россия)</StatusCell>
              <StatusCell $w={31}><Icon n="book" /></StatusCell>
              <Spacer />
              <svg width="11" height="11" viewBox="0 0 11 11" aria-hidden>
                <path d="M8 0h2v2H8zM8 4h2v2H8zM8 8h2v2H8zM4 4h2v2H4zM4 8h2v2H4zM0 8h2v2H0z" fill="#b8b8b8" />
              </svg>
            </StatusBar>
          </Client>
        </AppWindow>
        <DropShade />
      </Desktop>
    </>
  );
}
